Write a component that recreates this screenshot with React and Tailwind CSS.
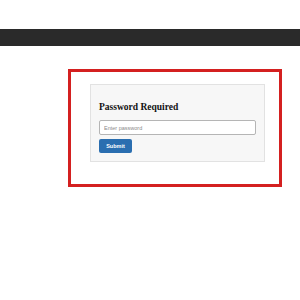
export default function App() {
  return (
    <div className="w-[300px] h-[300px] bg-white overflow-hidden" style={{ fontFamily: '"Liberation Sans", Arial, sans-serif' }}>
      <div className="h-[29px]" />
      <div className="h-[17px] bg-[#2a2a2a]" />
      <div className="pt-[23px] pl-[68px]">
        <div className="w-[214px] h-[118px] border-[3px] border-[#d42020] pt-[12px] pl-[19px]">
          <div className="w-[175px] h-[78px] bg-[#f7f7f7] border border-[#e2e2e2] pt-[16px] px-[8px]">
            <h2 className="text-[9.5px] leading-[12px] font-bold text-[#111]" style={{ fontFamily: '"Liberation Serif", "Times New Roman", serif' }}>
              Password Required
            </h2>
            <input
              type="password"
              placeholder="Enter password"
              className="mt-[7px] block w-[157px] h-[15px] bg-white border border-[#b5b5b5] rounded-[2px] px-[4px] text-[5.5px] placeholder:text-[#8a8a8a] outline-none"
            />
            <button className="mt-[4px] block w-[33px] h-[14px] bg-[#2a6eb0] rounded-[2px] text-white text-[5.5px] font-bold">
              Submit
            </button>
          </div>
        </div>
      </div>
    </div>
  );
}
